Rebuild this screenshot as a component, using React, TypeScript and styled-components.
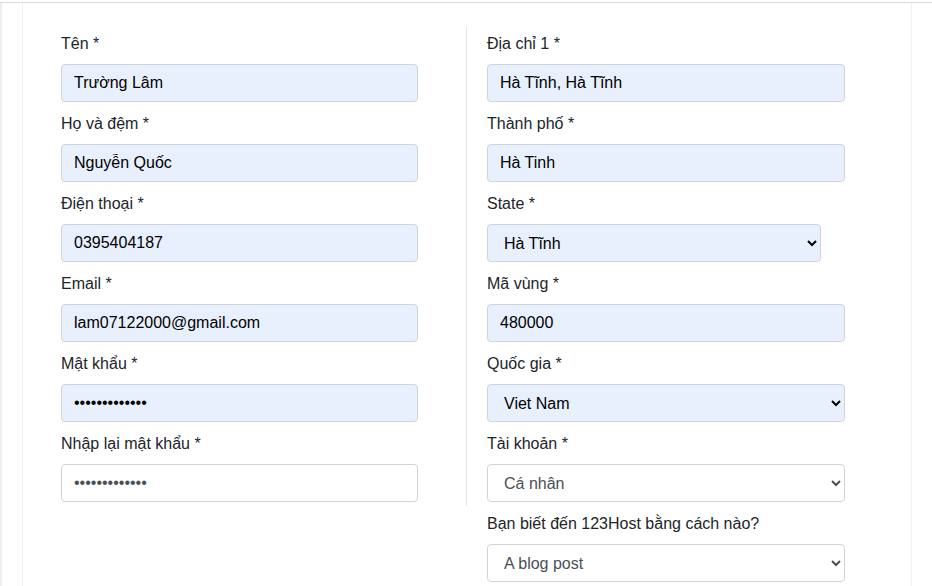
import React from 'react';
import styled, { createGlobalStyle, css } from 'styled-components';

const GlobalStyle = createGlobalStyle`
  html, body {
    margin: 0;
    padding: 0;
    background: #ffffff;
    font-family: "Liberation Sans", Arial, sans-serif;
    font-size: 16px;
    color: #212529;
  }
  * { box-sizing: border-box; }
`

const Page = styled.div`
  margin-top: 2px;
  height: 584px;
  overflow: hidden;
  border-top: 1px solid #dcdde0;
  display: flex;
  background: #ffffff;
`

const SideStrip = styled.div`
  flex: 0 0 2px;
  background: #eceef2;
`

const Gutter = styled.div`
  flex: 0 0 20px;
`

const Card = styled.div`
  flex: 0 0 890px;
  border-left: 1px solid #eeeff2;
  border-right: 1px solid #f1f2f4;
  padding-top: 24px;
  display: flex;
  align-items: flex-start;
`

const Column = styled.div<{ side: 'left' | 'right' }>`
  display: flex;
  flex-direction: column;
  padding-top: 5px;

  ${({ side }) => side === 'left' ? css`
    flex: 0 0 444px;
    padding: 5px 48px 4px 38px;
    border-right: 1px solid #e6e7ea;
  ` : css`
    flex: 0 0 378px;
    padding-left: 20px;
  `}
`

const Group = styled.div`
  display: flex;
  flex-direction: column;
  align-items: flex-start;
  margin-bottom: 10px;

  &:last-child { margin-bottom: 0; }
`

const Label = styled.label`
  line-height: 24px;
  margin-bottom: 8px;
  color: #212529;
`

const fieldBase = css<{ filled?: boolean }>`
  height: 38px;
  padding: 6px 12px;
  font-family: "Liberation Sans", Arial, sans-serif;
  font-size: 16px;
  line-height: 24px;
  border: 1px solid #ced4da;
  border-radius: 4px;
  outline: none;
  background-color: ${({ filled }) => filled ? '#e8f0fe' : '#ffffff'};
  color: ${({ filled }) => filled ? '#000000' : '#495057'};
`

const Input = styled.input<{ filled?: boolean }>`
  ${fieldBase}
  width: 100%;
`

const Select = styled.select<{ filled?: boolean; narrow?: boolean }>`
  ${fieldBase}
  width: ${({ narrow }) => narrow ? '334px' : '100%'};
`

type Field = {
  label: string;
  value: string;
  filled?: boolean;
  password?: boolean;
  select?: boolean;
  narrow?: boolean;
};

const leftFields: Field[] = [
  { label: 'Tên *', value: 'Trường Lâm', filled: true },
  { label: 'Họ và đệm *', value: 'Nguyễn Quốc', filled: true },
  { label: 'Điện thoại *', value: '0395404187', filled: true },
  { label: 'Email *', value: 'lam07122000@gmail.com', filled: true },
  { label: 'Mật khẩu *', value: 'lam0712200012', filled: true, password: true },
  { label: 'Nhập lại mật khẩu *', value: 'lam0712200012', password: true },
];

const rightFields: Field[] = [
  { label: 'Địa chỉ 1 *', value: 'Hà Tĩnh, Hà Tĩnh', filled: true },
  { label: 'Thành phố *', value: 'Hà Tinh', filled: true },
  { label: 'State *', value: 'Hà Tĩnh', filled: true, select: true, narrow: true },
  { label: 'Mã vùng *', value: '480000', filled: true },
  { label: 'Quốc gia *', value: 'Viet Nam', filled: true, select: true },
  { label: 'Tài khoản *', value: 'Cá nhân', select: true },
  { label: 'Bạn biết đến 123Host bằng cách nào?', value: 'A blog post', select: true },
];

const FormField: React.FC<{ field: Field }> = ({ field }) => (
  <Group>
    <Label>{field.label}</Label>
    {field.select ? (
      <Select filled={field.filled} narrow={field.narrow} defaultValue={field.value}>
        <option value={field.value}>{field.value}</option>
      </Select>
    ) : (
      <Input
        filled={field.filled}
        type={field.password ? 'password' : 'text'}
        defaultValue={field.value}
      />
    )}
  </Group>
);

const App: React.FC = () => (
  <>
    <GlobalStyle />
    <Page>
      <SideStrip />
      <Gutter />
      <Card>
        <Column side="left">
          {leftFields.map((f, i) => <FormField key={i} field={f} />)}
        </Column>
        <Column side="right">
          {rightFields.map((f, i) => <FormField key={i} field={f} />)}
        </Column>
      </Card>
    </Page>
  </>
);

export default App;
